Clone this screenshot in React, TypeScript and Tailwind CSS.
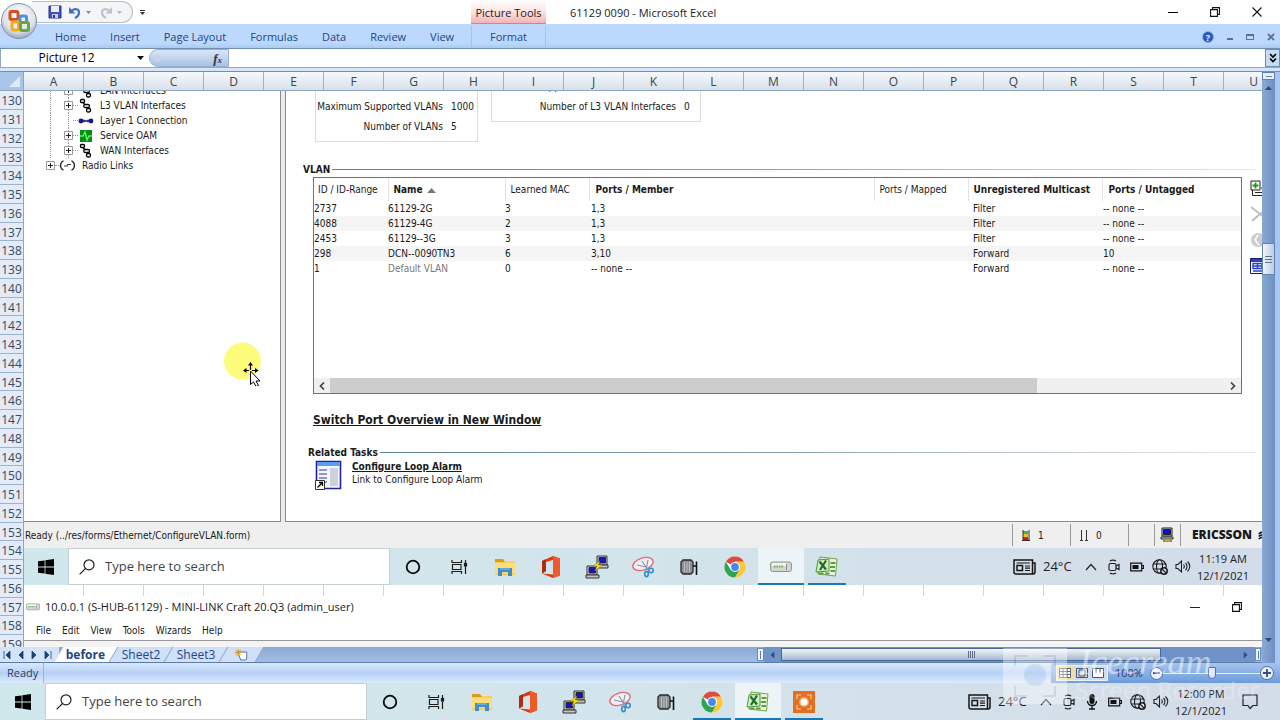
import { useState, type ReactNode } from "react";
import clsx from "clsx";

// ---------- Data ----------

const ribbonTabs = ["Home", "Insert", "Page Layout", "Formulas", "Data", "Review", "View"];
const columns = "ABCDEFGHIJKLMNOPQRSTU".split("");
const rowNumbers = Array.from({ length: 30 }, (_, i) => 130 + i);

const treeItems = [
  { label: "LAN Interfaces", icon: <LinkIcon />, expandable: true },
  { label: "L3 VLAN Interfaces", icon: <LinkIcon />, expandable: true },
  { label: "Layer 1 Connection", icon: <LayerIcon />, expandable: false },
  { label: "Service OAM", icon: <OamIcon />, expandable: true },
  { label: "WAN Interfaces", icon: <LinkIcon />, expandable: true },
];

const vlanColumns = [
  { label: "ID / ID-Range", width: "w-[74px]", pad: "pl-1", bold: false },
  { label: "Name", width: "w-[117px]", pad: "pl-[5px]", bold: true },
  { label: "Learned MAC", width: "w-[84px]", pad: "pl-[5px]", bold: false },
  { label: "Ports / Member", width: "w-[285px]", pad: "pl-[6px]", bold: true },
  { label: "Ports / Mapped", width: "w-[94px]", pad: "pl-[5px]", bold: false },
  { label: "Unregistered Multicast", width: "w-[134px]", pad: "pl-[5px]", bold: true },
  { label: "Ports / Untagged", width: "", pad: "pl-[6px]", bold: true },
];

const vlans = [
  { id: "2737", name: "61129-2G", mac: "3", member: "1,3", multicast: "Filter", untagged: "-- none --" },
  { id: "4088", name: "61129-4G", mac: "2", member: "1,3", multicast: "Filter", untagged: "-- none --" },
  { id: "2453", name: "61129--3G", mac: "3", member: "1,3", multicast: "Filter", untagged: "-- none --" },
  { id: "298", name: "DCN--0090TN3", mac: "6", member: "3,10", multicast: "Forward", untagged: "10" },
  { id: "1", name: "Default VLAN", mac: "0", member: "-- none --", multicast: "Forward", untagged: "-- none --" },
];

// ---------- Icons ----------

function LinkIcon() {
  return (
    <svg width="14" height="15" viewBox="0 0 14 15" fill="none" stroke="#000" strokeWidth="1.3">
      <rect x="1.500" y="1.500" width="4" height="3" rx="1" />
      <path d="M4 5l3 2M6 6.500h3a1.500 1.500 0 0 1 0 3H6.500a1.500 1.500 0 0 1-.5-3zM9 9.500l2 1" />
      <rect x="7.500" y="10.500" width="4" height="3.500" rx="1.500" />
    </svg>
  );
}

function LayerIcon() {
  return (
    <svg width="16" height="8" viewBox="0 0 16 8">
      <path d="M2 4h12" stroke="#111" strokeWidth="1.4" />
      <circle cx="3" cy="4" r="2.400" fill="#14149a" />
      <circle cx="13" cy="4" r="2.400" fill="#14149a" />
      <path d="M6 2.500v3M10 2.500v3" stroke="#14149a" />
    </svg>
  );
}

function OamIcon() {
  return (
    <svg width="12" height="12" viewBox="0 0 12 12">
      <rect width="12" height="12" fill="#0b8a1c" />
      <path d="M0 6h3l2-4 2 8 2-4h3" fill="none" stroke="#4dff4d" strokeWidth="1.400" />
    </svg>
  );
}

function OfficeOrb() {
  return (
    <svg width="38" height="38" viewBox="0 0 38 38">
      <defs>
        <radialGradient id="orb" cx="50%" cy="35%" r="65%">
          <stop offset="0" stopColor="#fff" />
          <stop offset=".7" stopColor="#dde1ea" />
          <stop offset="1" stopColor="#9aa5ba" />
        </radialGradient>
      </defs>
      <circle cx="19" cy="19" r="17.500" fill="url(#orb)" stroke="#8592ab" />
      <g fill="none" strokeWidth="3">
        <rect x="10" y="9.500" width="8" height="8" rx="1.500" stroke="#d8501c" />
        <rect x="20" y="14" width="6.500" height="6.500" rx="1.500" stroke="#4a94dd" />
        <rect x="12" y="20" width="6.500" height="8" rx="1.500" stroke="#f0ad1e" />
        <rect x="20.500" y="20.500" width="8" height="8" rx="1.500" stroke="#6aa83a" />
      </g>
    </svg>
  );
}

function SaveIcon() {
  return (
    <svg width="14" height="14" viewBox="0 0 14 14">
      <path d="M1 1h12v12H1z" fill="#4a51b5" stroke="#2c3190" />
      <rect x="3" y="1" width="8" height="6" fill="#e8edf8" />
      <rect x="4" y="9" width="6" height="4" fill="#c9cfe6" />
      <rect x="5" y="10" width="2" height="3" fill="#2c3190" />
    </svg>
  );
}

function CurvedArrow({ color, flip }: { color: string; flip?: boolean }) {
  return (
    <svg width="12" height="13" viewBox="0 0 12 13" className={clsx(flip && "-scale-x-100")}>
      <path d="M3 4.500C6 2 10 3 10 6.500c0 3-2 4.500-4 5.500" fill="none" stroke={color} strokeWidth="2.200" />
      <path d="M0 1v6.500h6.500z" fill={color} />
    </svg>
  );
}

function Caret({ color = "#35507f", className }: { color?: string; className?: string }) {
  return (
    <svg width="7" height="4" viewBox="0 0 7 4" className={className}>
      <path d="M0 0h7L3.500 4z" fill={color} />
    </svg>
  );
}

function RestoreIcon({ size = 10 }: { size?: number }) {
  return (
    <svg width={size} height={size} viewBox="0 0 10 10" fill="none" stroke="#111" strokeWidth="1.100">
      <path d="M.6 2.600h6.800v6.800H.6zM2.600 2.600V.6h6.800v6.800h-2" />
    </svg>
  );
}

function WindowsIcon() {
  return (
    <svg width="16" height="16" viewBox="0 0 16 16">
      <path d="M0 2.300L6.600 1.400v6.200H0zM7.400 1.300L16 0v7.600H7.400zM0 8.400h6.600v6.200L0 13.700zM7.400 8.400H16V16l-8.600-1.200z" />
    </svg>
  );
}

function SearchIcon() {
  return (
    <svg width="16" height="16" viewBox="0 0 16 16" fill="none" stroke="#222" strokeWidth="1.200">
      <circle cx="10" cy="5.800" r="5" />
      <path d="M6.500 9.500L.6 15.400" />
    </svg>
  );
}

function CortanaIcon() {
  return (
    <svg width="16" height="16" viewBox="0 0 16 16">
      <circle cx="8" cy="8" r="6.300" fill="none" stroke="#0a0a0a" strokeWidth="1.800" />
    </svg>
  );
}

function TaskViewIcon() {
  return (
    <svg width="17" height="16" viewBox="0 0 17 16" fill="none" stroke="#1b1b1b" strokeWidth="1.200">
      <path d="M1 1v2.500h9.500V1M1 15v-2.500h9.500V15M1.500 5.500H10v5H1.500zM14.500 1v3M14.500 7.500V15" />
      <rect x="13.500" y="4.500" width="2" height="2.500" fill="#1b1b1b" />
    </svg>
  );
}

function FolderIcon() {
  return (
    <svg width="22" height="20" viewBox="0 0 22 20">
      <path d="M1 2h8l1.500 2H21v14H1z" fill="#f9cf57" />
      <path d="M1 2h8l1.500 2v1H1z" fill="#d99b1c" />
      <path d="M1 6h20v10H1z" fill="#fddc7b" />
      <path d="M4 11h14v8h-4v-4H8v4H4z" fill="#3f8ecb" />
      <path d="M6 11h10v2H6z" fill="#62abdf" />
    </svg>
  );
}

function OfficeIcon() {
  return (
    <svg width="18" height="22" viewBox="0 0 18 22">
      <path d="M0 5L11 0l7 2.500v17L11 22 0 17.500l11 1V4L4 6v9L0 17.500z" fill="#dc3c12" />
      <path d="M11 0l7 2.500v17L11 22z" fill="#ee5a2a" />
      <path d="M0 5L4 3.300V15l-4 2.500z" fill="#b7290d" />
    </svg>
  );
}

function PuttyIcon() {
  return (
    <svg width="24" height="24" viewBox="0 0 24 24" stroke="#222" strokeWidth=".9">
      <path d="M12 1h10v9H12z" fill="#d5d5c8" />
      <path d="M14 2.500h6.500v5.500H14z" fill="#1414c4" />
      <path d="M11 10h12v3H11z" fill="#c5c5c0" />
      <path d="M2 11h10v9H2z" fill="#d5d5c8" />
      <path d="M4 12.500h6.500V18H4z" fill="#1414c4" />
      <path d="M1 20h13v3H1z" fill="#c5c5c0" />
      <path d="M15 6l-7 5h4l-2 5 7-6h-4z" fill="#ffe716" stroke="#8d7c00" strokeWidth=".5" />
    </svg>
  );
}

function SnipIcon() {
  return (
    <svg width="24" height="22" viewBox="0 0 24 22" fill="none">
      <ellipse cx="12" cy="8" rx="10.500" ry="6" transform="rotate(-18 12 8)" fill="#f6eef2" stroke="#dc6b78" strokeWidth="1.400" />
      <path d="M11 5l6 9M17 4l-2 10M6 9l9 2" stroke="#8796a5" strokeWidth="1.200" />
      <circle cx="20" cy="14.500" r="2.200" stroke="#2f8fd0" strokeWidth="1.600" />
      <ellipse cx="15.500" cy="18" rx="1.800" ry="2.600" stroke="#2f8fd0" strokeWidth="1.600" />
    </svg>
  );
}

function DeviceIcon() {
  return (
    <svg width="18" height="18" viewBox="0 0 18 18">
      <path d="M3 2h8l2 2v10l-2 2H3l-2-2V4z" fill="#8f9295" stroke="#2a2a2a" strokeWidth="1.300" />
      <path d="M4.500 4v10M7 4v10M9.500 4v10" stroke="#b9bcbe" />
      <path d="M13 8h3M16.500 3.500V17" stroke="#111" strokeWidth="1.600" />
    </svg>
  );
}

function ChromeIcon() {
  return (
    <svg width="22" height="22" viewBox="0 0 22 22">
      <circle cx="11" cy="11" r="10.500" fill="#fff" />
      <path d="M11 11L1.900 5.750A10.500 10.500 0 0 1 20.100 5.750H11z" fill="#dd4b3e" />
      <path d="M20.100 5.750A10.500 10.500 0 0 1 11 21.500l4.500-8L11 5.750z" fill="#fcc934" />
      <path d="M11 21.500A10.500 10.500 0 0 1 1.900 5.750L6.500 13.600 15.500 13.500z" fill="#2da44e" />
      <circle cx="11" cy="11" r="5" fill="#fff" />
      <circle cx="11" cy="11" r="3.900" fill="#4688f1" />
    </svg>
  );
}

function SwitchIcon({ width = 22, height = 12 }: { width?: number; height?: number }) {
  return (
    <svg width={width} height={height} viewBox="0 0 22 12">
      <rect x=".6" y="1" width="20.800" height="9.500" rx="2" fill="#d4d6d3" stroke="#8f918f" />
      <rect x="2" y="2" width="14" height="3" fill="#f2f4f1" />
      <path d="M4 5.500h10" stroke="#63b04b" strokeWidth="2" strokeDasharray="1.500 1" />
      <path d="M16.500 3v6" stroke="#8f918f" />
    </svg>
  );
}

function ExcelIcon() {
  return (
    <svg width="24" height="22" viewBox="0 0 24 22">
      <path d="M5 1l17 2-1.500 17L3 18z" fill="#e9f3df" stroke="#6ea54a" />
      <path d="M3 4L14 3v12L1 16z" fill="#d6ebc2" stroke="#4f9434" />
      <path d="M4.500 5.500l6.500 8M11 4.500L5 14" stroke="#1d6b2d" strokeWidth="2.200" />
      <path d="M15.500 7h5M15 11h5M3.500 17.500h5M10 17.500h4.500M15.500 15h4.500" stroke="#5aa23c" strokeWidth="2.200" />
    </svg>
  );
}

function RecorderIcon() {
  return (
    <svg width="22" height="22" viewBox="0 0 22 22">
      <rect width="22" height="22" fill="#e2701f" />
      <path d="M4 8V4h4M14 4h4v4M18 14v4h-4M8 18H4v-4" fill="none" stroke="#fbc9a0" strokeWidth="1.200" />
      <circle cx="11" cy="11" r="5" fill="#f6a566" />
      <circle cx="11" cy="11" r="3.600" fill="#fff" />
    </svg>
  );
}

function NewsIcon() {
  return (
    <svg width="23" height="16" viewBox="0 0 23 16" fill="none" stroke="#161616" strokeWidth="1.500">
      <path d="M1 1h18.500v14H3a2 2 0 0 1-2-2zM19.500 4H22v9a2 2 0 0 1-2 2" />
      <rect x="4" y="6.500" width="5.500" height="5" />
      <path d="M3.500 4H17M12 7h5M12 9.200h5M12 11.500h5" strokeWidth="1.200" />
    </svg>
  );
}

function ChevronUpIcon() {
  return (
    <svg width="12" height="8" viewBox="0 0 12 8" fill="none" stroke="#222" strokeWidth="1.200">
      <path d="M1 7l5-5.500L11 7" />
    </svg>
  );
}

function MeetIcon() {
  return (
    <svg width="12" height="16" viewBox="0 0 12 16" fill="none" stroke="#222" strokeWidth="1.200">
      <rect x="1" y="4.500" width="7" height="7" rx="1.500" />
      <path d="M8 7l3-1.500v5L8 9M2 2c1.500-1.300 4.500-1.300 6 0M2 14c1.500 1.300 4.500 1.300 6 0" />
    </svg>
  );
}

function MicIcon() {
  return (
    <svg width="12" height="16" viewBox="0 0 12 16">
      <rect x="3.500" y="0" width="5" height="10" rx="2.500" fill="#111" />
      <path d="M1.500 7c0 6 9 6 9 0M6 11.500V15M3 15h6" fill="none" stroke="#111" strokeWidth="1.400" />
    </svg>
  );
}

function BatteryIcon() {
  return (
    <svg width="14" height="10" viewBox="0 0 14 10">
      <path d="M.7 1.200h11v7.600H.7zM11.700 3.500h1.800v3h-1.800" fill="none" stroke="#111" strokeWidth="1.200" />
      <rect x="2.500" y="3" width="6" height="4" fill="#111" />
    </svg>
  );
}

function GlobeIcon() {
  return (
    <svg width="16" height="16" viewBox="0 0 16 16" fill="none" stroke="#1a1a1a" strokeWidth="1.100">
      <circle cx="7.500" cy="7.500" r="6.700" />
      <ellipse cx="7.500" cy="7.500" rx="3" ry="6.700" />
      <path d="M1 5h13M1 10h8" />
      <circle cx="12" cy="12" r="3.200" fill="#d5e1e9" strokeWidth="1.500" />
      <path d="M10 10l4 4" />
    </svg>
  );
}

function VolumeIcon() {
  return (
    <svg width="16" height="13" viewBox="0 0 16 13" fill="none" stroke="#222" strokeWidth="1.100">
      <path d="M1 4.500h2L6.500 1v11L3 8.500H1zM8.500 4.500c1 1.200 1 2.800 0 4M10.500 3c2 2 2 5 0 7M12.500 1.500c3 3 3 7 0 10" />
    </svg>
  );
}

function ComputerIcon() {
  return (
    <svg width="15" height="16" viewBox="0 0 15 16" stroke="#222">
      <path d="M2 1h10v8H2z" fill="#c9cbd8" />
      <path d="M3.500 2.500h7v5h-7z" fill="#0a12d6" />
      <path d="M1 10h12v2H1zM3 14h9" fill="#ddd" />
      <path d="M5 13.500h5" stroke="#d8b714" strokeWidth="1.500" />
    </svg>
  );
}

function TaskShortcutIcon() {
  return (
    <svg width="27" height="31" viewBox="0 0 27 31">
      <path d="M1.500 1.500h24v27h-24z" fill="#f4f7ff" stroke="#23239a" strokeWidth="1.600" />
      <path d="M2 2h23v4H2z" fill="#5b9df0" />
      <path d="M4 10h8M4 14h8M4 18h8M8 22h4" stroke="#7272cf" strokeWidth="1.500" />
      <path d="M15 8h8v18h-8z" fill="#ccd2da" />
      <path d="M.5 20.500h9v9h-9z" fill="#fff" stroke="#333" />
      <path d="M2.500 27.500L7 23M4 22.500h3.500V26" fill="none" stroke="#000" strokeWidth="1.300" />
    </svg>
  );
}

// ---------- Excel chrome ----------

function TitleBar() {
  return (
    <header className="relative flex h-6 shrink-0 items-center bg-white">
      <button aria-label="Office Button" className="absolute left-0 top-[2px] z-20">
        <OfficeOrb />
      </button>
      <div className="ml-8 flex h-[22px] w-[101px] items-center gap-[5px] rounded-r-full border border-l-0 border-[#b9bdc4] bg-[#f4f5f7] pl-4">
        <button aria-label="Save"><SaveIcon /></button>
        <button aria-label="Undo" className="ml-[2px]"><CurvedArrow color="#3f6fc6" /></button>
        <Caret color="#7a8cae" className="h-[3px] w-[5px]" />
        <button aria-label="Redo" className="ml-1"><CurvedArrow color="#bcc2cc" flip /></button>
        <Caret color="#b0b6c0" className="h-[3px] w-[5px]" />
      </div>
      <button aria-label="Customize Quick Access Toolbar" className="ml-[7px] flex flex-col items-center gap-[1px]">
        <span className="h-px w-[5px] bg-[#333]" />
        <Caret color="#333" className="h-[3px] w-[5px]" />
      </button>
      <div className="ml-[326px] flex h-6 w-[75px] items-center justify-center border-b border-[#e77b80] bg-gradient-to-b from-white via-[#fbe3e3] to-[#f3b3b5] pt-[3px] text-[11px] text-[#222]">
        Picture Tools
      </div>
      <h1 className="ml-6 pt-[2px] text-[11px] text-[#222]">61129 0090 - Microsoft Excel</h1>
      <div className="ml-auto flex items-center gap-8 pr-[18px]">
        <button aria-label="Minimize" className="h-px w-[10px] bg-black" />
        <button aria-label="Restore"><RestoreIcon /></button>
        <button aria-label="Close">
          <svg width="10" height="10" viewBox="0 0 10 10" stroke="#111" strokeWidth="1.100">
            <path d="M.5.500l9 9M9.500.500l-9 9" />
          </svg>
        </button>
      </div>
    </header>
  );
}

function Ribbon() {
  return (
    <nav className="flex h-[25px] shrink-0 items-center border-b border-[#6d8fb3] bg-gradient-to-b from-[#bcd9fd] from-80% to-[#a9cbee] pt-[2px] text-[11px] text-[#1f4584]">
      <ul className="flex w-[471px] items-center gap-6 pl-[55px]">
        {ribbonTabs.map((tab) => (
          <li key={tab}>
            <button className="whitespace-nowrap">{tab}</button>
          </li>
        ))}
      </ul>
      <button className="h-full w-[75px] border-x border-[#a8c2e3]">Format</button>
      <div className="ml-auto flex items-center gap-[13px] pr-[5px]">
        <button aria-label="Help" className="flex size-3 items-center justify-center rounded-full border border-[#8fb2e6] bg-[#2358c4] text-[9px] font-bold leading-none text-white">
          ?
        </button>
        <button aria-label="Minimize workbook" className="mt-[3px] h-[2px] w-[6px] bg-[#5d708c]" />
        <button aria-label="Restore workbook" className="h-[6px] w-[8px] border border-t-2 border-[#5d708c]" />
        <button aria-label="Close workbook">
          <svg width="8" height="8" viewBox="0 0 8 8" stroke="#5d708c" strokeWidth="1.800">
            <path d="M1 1l6 6M7 1L1 7" />
          </svg>
        </button>
      </div>
    </nav>
  );
}

function FormulaBar() {
  return (
    <div className="h-[23px] shrink-0 border-b border-[#6d8fb3] bg-[#d5e6fa]">
      <div className="flex h-[19px] items-stretch border-b border-[#8fa9c8] bg-white">
        <input aria-label="Name Box" defaultValue="Picture 12" className="w-[132px] border-l border-[#8fa9c8] bg-white text-center text-xs text-black outline-none" />
        <button aria-label="Name list" className="flex w-4 items-center justify-center">
          <Caret color="#000" />
        </button>
        <div className="ml-[1px] flex w-20 items-center justify-between rounded-l-full border border-[#9cb1cf] bg-gradient-to-b from-[#dbe7f8] to-[#a9c1e4] pl-1">
          <span className="size-[7px] rounded-full bg-[#c9d3e3]" />
          <button className="pr-[6px] font-['Liberation_Serif',serif] text-[13px] font-bold italic leading-none text-[#333]">
            f<span className="text-[9px]">x</span>
          </button>
        </div>
        <input aria-label="Formula" className="min-w-0 flex-1 bg-white outline-none" />
        <button aria-label="Expand formula bar" className="flex w-[15px] flex-col items-center justify-center border border-[#6d8fb3] bg-[#c9dbf4]">
          <svg width="8" height="10" viewBox="0 0 8 10" fill="none" stroke="#000" strokeWidth="1.600">
            <path d="M1 1l3 3 3-3M1 5.500l3 3 3-3" />
          </svg>
        </button>
      </div>
    </div>
  );
}

function ColumnHeader() {
  return (
    <div className="flex h-[19px] shrink-0 overflow-hidden border-b border-[#8ea5bf] bg-gradient-to-b from-[#f6f9fc] to-[#d8e0ea] text-xs text-[#3b454f]">
      <button aria-label="Select all" className="flex w-6 shrink-0 items-end justify-end border-r border-[#8ea5bf] bg-[#a9c4e9] p-[3px]">
        <svg width="11" height="11" viewBox="0 0 11 11">
          <path d="M11 0v11H0z" fill="#dfe9f7" />
        </svg>
      </button>
      {columns.map((letter) => (
        <div key={letter} className="flex w-[60px] shrink-0 items-center justify-center border-r border-[#9eb0c4] pt-[2px]">
          {letter}
        </div>
      ))}
    </div>
  );
}

function RowHeader() {
  return (
    <div className="w-6 shrink-0 overflow-hidden border-r border-[#8ea5bf] bg-[#e2ebf7] text-center text-xs text-[#3b4a5c]">
      {rowNumbers.map((n, i) => (
        <div
          key={n}
          className={clsx("flex items-center justify-center border-b border-[#9ab4d0] pt-[2px]", i % 4 === 3 ? "h-[18px]" : "h-[19px]")}
        >
          {n}
        </div>
      ))}
    </div>
  );
}

function VerticalScrollBar() {
  return (
    <div className="flex shrink-0">
      <div className="flex w-[13px] flex-col items-center bg-gradient-to-r from-[#89a9d4] to-[#6c90c2] pb-[21px]">
        <div className="flex h-2 w-full items-center justify-center border border-[#5f82b2] bg-[#e8f0fb]">
          <span className="h-px w-[6px] bg-[#5f82b2]" />
        </div>
        <Caret color="#2d4a7a" className="mt-[6px] rotate-180" />
        <div className="mt-[153px] flex h-8 w-full flex-col items-center justify-center gap-[2px] border border-[#5f82b2] bg-gradient-to-r from-[#f2f6fb] to-[#bccbdf]">
          <span className="h-px w-[7px] bg-[#60718c]" />
          <span className="h-px w-[7px] bg-[#60718c]" />
          <span className="h-px w-[7px] bg-[#60718c]" />
        </div>
        <Caret color="#2d4a7a" className="mt-auto" />
      </div>
      <div className="w-[5px] bg-[#a9c6f2]" />
    </div>
  );
}

function SheetTabs() {
  const [active, setActive] = useState("before");
  return (
    <div className="flex h-4 shrink-0 items-stretch border-b border-[#5b7dab] bg-gradient-to-b from-[#8aa9d6] to-[#a3bee3]">
      <div className="flex w-[59px] items-center justify-around bg-[#d3e3f8] pr-1">
        {["M1 0v8M7 0v8L3 4z", "M6 0v8L2 4z", "M2 0v8l4-4z", "M1 0v8l4-4zM7 0v8"].map((d) => (
          <button key={d} aria-label="Scroll sheets">
            <svg width="8" height="8" viewBox="0 0 8 8" fill="#1d3f7a" stroke="#1d3f7a" strokeWidth=".8">
              <path d={d} />
            </svg>
          </button>
        ))}
      </div>
      {["before", "Sheet2", "Sheet3"].map((sheet) => (
        <button
          key={sheet}
          onClick={() => setActive(sheet)}
          className={clsx(
            "flex w-[55px] -skew-x-[30deg] items-center justify-center border-r border-[#7f9cc6] text-xs text-[#1f4584]",
            active === sheet ? "bg-white font-bold" : "bg-[#cfe0f7]"
          )}
        >
          <span className="skew-x-[30deg]">{sheet}</span>
        </button>
      ))}
      <button aria-label="Insert worksheet" className="flex w-9 -skew-x-[30deg] items-center justify-center border-r border-[#7f9cc6] bg-[#cfe0f7]">
        <svg width="14" height="12" viewBox="0 0 14 12" className="skew-x-[30deg]">
          <path d="M3 3h9v7l-1 1H6z" fill="#fff" stroke="#5874a8" />
          <path d="M3.500 0v7M0 3.500h7M1 1l5 5M6 1L1 6" stroke="#d09a2c" />
        </svg>
      </button>
      <div className="ml-auto flex w-[505px] items-stretch">
        <div className="my-px flex w-[7px] items-center justify-center border border-[#6b8bb8] bg-[#eef4fc]">
          <span className="h-2 w-px bg-[#5b7dab]" />
        </div>
        <div className="flex w-[17px] items-center justify-center bg-[#7093c8]">
          <Caret color="#2d4a7a" className="rotate-90" />
        </div>
        <div className="flex flex-1 items-stretch bg-[#6f93c8]">
          <div className="my-px flex w-[380px] items-center justify-center gap-[1px] border border-[#48679a] bg-gradient-to-b from-[#f3f6fa] to-[#a5b7cf]">
            <span className="h-[7px] w-px bg-[#5d708c]" />
            <span className="h-[7px] w-px bg-[#5d708c]" />
            <span className="h-[7px] w-px bg-[#5d708c]" />
            <span className="h-[7px] w-px bg-[#5d708c]" />
          </div>
          <Caret color="#2d4a7a" className="my-auto ml-auto mr-[6px] -rotate-90" />
        </div>
        <div className="my-px mr-px flex w-[6px] items-center justify-center border border-[#6b8bb8] bg-[#eef4fc]">
          <span className="h-2 w-px bg-[#5b7dab]" />
        </div>
      </div>
    </div>
  );
}

function StatusBar() {
  const [zoom, setZoom] = useState(50);
  return (
    <footer className="flex h-5 shrink-0 items-stretch bg-gradient-to-b from-[#d9e8fb] via-[#b5d0f5] to-[#dceafc] text-[11px] text-[#1f3a6e]">
      <div className="flex w-11 items-center border-r border-[#9ab5dc] pl-[7px]">Ready</div>
      <div className="ml-auto flex w-[229px] items-center bg-gradient-to-b from-[#a5c4ee] to-[#6c9bdb] pl-[5px] pr-[6px]">
        <div className="flex h-4 w-[52px] border border-white/60 bg-[#cfdcf0]">
          <button aria-label="Normal view" className="flex flex-1 items-center justify-center bg-[#fbdc96]">
            <svg width="12" height="10" viewBox="0 0 12 10" fill="#fff" stroke="#4a5568" strokeWidth=".9">
              <path d="M.5.500h11v9H.5zM.5 3.500h11M.5 6.500h11M4 .5v9M8 .5v9" />
            </svg>
          </button>
          <button aria-label="Page layout view" className="flex flex-1 items-center justify-center">
            <svg width="12" height="10" viewBox="0 0 12 10" fill="#d7dde6" stroke="#4a5568">
              <path d="M.5.500h11v9H.5zM3 2h6v6H3z" />
            </svg>
          </button>
          <button aria-label="Page break preview" className="flex flex-1 items-center justify-center">
            <svg width="12" height="10" viewBox="0 0 12 10" fill="#fff" stroke="#4a5568">
              <path d="M.5.500h11v9H.5zM4 .5v5M8 .5v5" />
            </svg>
          </button>
        </div>
        <span className="w-[43px] text-center">100%</span>
        <button aria-label="Zoom out" className="ml-auto flex size-[13px] items-center justify-center rounded-full border border-[#4f73a8] bg-[#e9f1fb]">
          <span className="h-[2px] w-[7px] bg-[#33507f]" />
        </button>
        <input
          aria-label="Zoom"
          type="range"
          value={zoom}
          onChange={(e) => setZoom(Number(e.target.value))}
          className="h-3 w-[97px] appearance-none bg-transparent [&::-webkit-slider-runnable-track]:h-px [&::-webkit-slider-runnable-track]:bg-white/80 [&::-webkit-slider-thumb]:-mt-[6px] [&::-webkit-slider-thumb]:h-3 [&::-webkit-slider-thumb]:w-2 [&::-webkit-slider-thumb]:appearance-none [&::-webkit-slider-thumb]:rounded-b-full [&::-webkit-slider-thumb]:border [&::-webkit-slider-thumb]:border-[#4f73a8] [&::-webkit-slider-thumb]:bg-[#dfe9f7]"
        />
        <button aria-label="Zoom in" className="flex size-[14px] items-center justify-center rounded-full border border-[#4f73a8] bg-[#e9f1fb] text-[#33507f]">
          <svg width="8" height="8" viewBox="0 0 8 8" stroke="#33507f" strokeWidth="1.800">
            <path d="M0 4h8M4 0v8" />
          </svg>
        </button>
      </div>
    </footer>
  );
}

// ---------- Windows taskbar ----------

type App = { name: string; icon: ReactNode; state?: "open" | "active" };

const pinnedApps: App[] = [
  { name: "Cortana", icon: <CortanaIcon /> },
  { name: "Task View", icon: <TaskViewIcon /> },
  { name: "File Explorer", icon: <FolderIcon /> },
  { name: "Office", icon: <OfficeIcon /> },
  { name: "PuTTY", icon: <PuttyIcon /> },
  { name: "Snipping Tool", icon: <SnipIcon /> },
  { name: "Device", icon: <DeviceIcon /> },
];

function Taskbar({ id, apps, time, live }: { id: string; apps: App[]; time: string; live?: boolean }) {
  return (
    <div className="flex h-[37px] shrink-0 items-stretch bg-gradient-to-r from-[#cfe8ec] via-[#d3e4eb] to-[#d3dce9]">
      <button aria-label="Start" className={clsx("flex items-center justify-center", live ? "w-[45px]" : "w-[44px]")}>
        <WindowsIcon />
      </button>
      <label htmlFor={id} className="flex w-[322px] items-center gap-[10px] border border-[#c3cfd4] bg-white pl-[10px]">
        <SearchIcon />
        <input id={id} placeholder="Type here to search" className="w-64 text-[13px] text-[#444] outline-none placeholder:text-[#444]" />
      </label>
      {[...pinnedApps, ...apps].map((app) => (
        <button
          key={app.name}
          aria-label={app.name}
          className={clsx("flex w-[46px] flex-col items-center", app.state === "active" && "bg-[#edf4f8]")}
        >
          <span className="flex flex-1 items-center">{app.icon}</span>
          {app.state && <span className={clsx("-mt-[2px] h-[2px] bg-[#1a78b8]", app.state === "active" ? "w-full" : "w-[38px]")} />}
        </button>
      ))}
      <div className={clsx("ml-auto flex items-center text-[#222]", live ? "pr-[22px]" : "pr-[10px]")}>
        <NewsIcon />
        <span className="ml-[7px] w-9 text-[13px]">24°C</span>
        <div className="flex">
          <TrayIcon><ChevronUpIcon /></TrayIcon>
          <TrayIcon><MeetIcon /></TrayIcon>
          {live && <TrayIcon><MicIcon /></TrayIcon>}
          <TrayIcon><BatteryIcon /></TrayIcon>
          <TrayIcon><GlobeIcon /></TrayIcon>
          <TrayIcon><VolumeIcon /></TrayIcon>
        </div>
        <div className="w-[58px] text-center text-[11px] leading-[17px]">
          <div>{time}</div>
          <div>12/1/2021</div>
        </div>
        {live && (
          <button aria-label="Notifications" className="ml-3">
            <svg width="16" height="16" viewBox="0 0 16 16" fill="none" stroke="#222" strokeWidth="1.200">
              <path d="M1 1h14v10.500h-4L8 14.500l-2-3H1z" />
            </svg>
          </button>
        )}
      </div>
    </div>
  );
}

function TrayIcon({ children }: { children: ReactNode }) {
  return <span className="flex w-[23px] items-center justify-center">{children}</span>;
}

// ---------- MINI-LINK Craft window ----------

function Expander() {
  return (
    <svg width="9" height="9" viewBox="0 0 9 9">
      <path d="M.5.500h8v8h-8z" fill="#fff" stroke="#9a9a9a" />
      <path d="M2 4.500h5M4.500 2v5" stroke="#222" />
    </svg>
  );
}

function NavigationTree() {
  return (
    <aside className="w-[257px] shrink-0 overflow-hidden border-b border-r border-[#8c8c8c] pl-[26px]">
      <ul className="-mt-2">
        {treeItems.map((item) => (
          <li key={item.label} className="flex h-[15px] border-l border-dotted border-[#999] pl-[17px]">
            <div className="flex items-center border-l border-dotted border-[#999]">
              <span className="-ml-[5px] flex w-[9px]">{item.expandable && <Expander />}</span>
              <span className="w-[5px] border-t border-dotted border-[#999]" />
              <span className="flex w-4 justify-center">{item.icon}</span>
              <span className="ml-[6px] whitespace-nowrap">{item.label}</span>
            </div>
          </li>
        ))}
        <li className="-ml-1 flex h-[15px] items-center">
          <Expander />
          <span className="w-1 border-t border-dotted border-[#999]" />
          <svg width="17" height="11" viewBox="0 0 17 11" fill="none" stroke="#222" strokeWidth="1.300">
            <path d="M4.500.800C.5 3 .5 8 4.500 10.200M12.500.800c4 2.200 4 7.200 0 9.400" />
            <path d="M5 6h3.500V4.500H12" strokeWidth=".9" />
          </svg>
          <span className="ml-[6px]">Radio Links</span>
        </li>
      </ul>
    </aside>
  );
}

function SectionTitle({ children }: { children: ReactNode }) {
  return (
    <div className="flex h-4 items-center gap-[2px] pr-[6px] font-bold">
      <h2>{children}</h2>
      <span className="h-px flex-1 bg-gradient-to-r from-[#5b7f9f] via-[#8fa5b5] to-[#e8e8e8]" />
    </div>
  );
}

function VlanTable() {
  return (
    <div className="flex h-[217px] min-w-0 flex-1 flex-col border border-[#4f7aa6]">
      <table className="w-full table-fixed border-collapse text-left">
        <thead>
          <tr className="h-[23px]">
            {vlanColumns.map((col) => (
              <th
                key={col.label}
                className={clsx(
                  "whitespace-nowrap border-r border-[#e3e3e3] p-0 last:border-r-0",
                  col.width,
                  col.pad,
                  col.bold ? "font-bold" : "font-normal"
                )}
              >
                {col.label}
                {col.label === "Name" && <Caret color="#777" className="ml-1 inline h-[5px] w-[9px] rotate-180" />}
              </th>
            ))}
          </tr>
        </thead>
        <tbody>
          {vlans.map((vlan) => (
            <tr key={vlan.id} className="h-[15px] leading-[15px] even:bg-[#f5f5f5]">
              <td className="p-0">{vlan.id}</td>
              <td className={clsx("p-0", vlan.id === "1" && "text-[#777]")}>{vlan.name}</td>
              <td className="p-0">{vlan.mac}</td>
              <td className="p-0 pl-[2px]">{vlan.member}</td>
              <td className="p-0" />
              <td className="p-0 pl-[5px]">{vlan.multicast}</td>
              <td className="p-0 pl-[1px]">{vlan.untagged}</td>
            </tr>
          ))}
        </tbody>
      </table>
      <div className="mt-auto flex h-[15px] items-center bg-[#f0f0f0]">
        <button aria-label="Scroll left" className="flex w-4 justify-center">
          <svg width="6" height="8" viewBox="0 0 6 8" fill="none" stroke="#444" strokeWidth="1.700"><path d="M5 .5L1.500 4 5 7.500" /></svg>
        </button>
        <div className="flex h-full flex-1">
          <div className="w-[79%] bg-[#cdcdcd]" />
        </div>
        <button aria-label="Scroll right" className="flex w-4 justify-center">
          <svg width="6" height="8" viewBox="0 0 6 8" fill="none" stroke="#444" strokeWidth="1.700"><path d="M1 .5L4.500 4 1 7.500" /></svg>
        </button>
      </div>
    </div>
  );
}

function TableActions() {
  return (
    <div className="ml-2 flex w-[12px] shrink-0 flex-col gap-[10px] overflow-hidden pt-[3px]">
      <button aria-label="Add">
        <svg width="16" height="16" viewBox="0 0 16 16">
          <path d="M1 1h9v9H1z" fill="#fff" stroke="#222" />
          <path d="M5.500 2.500v6M2.500 5.500h6" stroke="#18a018" strokeWidth="1.800" />
          <path d="M2.500 10v5.500H14M5 12.500h8M11 8h4" fill="none" stroke="#222" />
        </svg>
      </button>
      <button aria-label="Remove">
        <svg width="16" height="16" viewBox="0 0 16 16" fill="none" stroke="#bbb" strokeWidth="1.800"><path d="M1 1l9 7-8 7M16 3l-6 5 6 5" /></svg>
      </button>
      <button aria-label="Undo change">
        <svg width="16" height="16" viewBox="0 0 16 16"><circle cx="8" cy="8" r="7" fill="#ccc" /><path d="M8 3L5 8l4 5" fill="none" stroke="#fff" strokeWidth="1.500" /></svg>
      </button>
      <button aria-label="Details">
        <svg width="16" height="16" viewBox="0 0 16 16">
          <path d="M.5.500h15v15H.5z" fill="#fff" stroke="#111a6e" />
          <path d="M1 1h14v3H1z" fill="#2a3fd0" />
          <path d="M3 5.500h9v5H3zM3 8h9M7.500 5.500v5M3 13h9" fill="none" stroke="#2a3fd0" strokeWidth="1.400" />
        </svg>
      </button>
    </div>
  );
}

function VlanForm() {
  return (
    <section className="min-w-0 flex-1 overflow-hidden border-b border-l border-[#8c8c8c] pl-[17px]">
      <div className="flex items-start gap-[13px] pl-3">
        <dl className="grid h-[51px] w-[163px] grid-cols-[1fr_24px] content-start gap-x-2 border border-t-0 border-[#dcdcdc] pr-[2px] pt-[6px] leading-5">
          <dt className="whitespace-nowrap text-right">Maximum Supported VLANs</dt>
          <dd>1000</dd>
          <dt className="text-right">Number of VLANs</dt>
          <dd>5</dd>
        </dl>
        <dl className="grid h-[31px] w-[210px] grid-cols-[1fr_16px] content-end gap-x-2 overflow-hidden border border-t-0 border-[#dcdcdc] pb-1 leading-5">
          <dt className="pl-[45px]">Supported</dt>
          <dd />
          <dt className="text-right">Number of L3 VLAN Interfaces</dt>
          <dd>0</dd>
        </dl>
      </div>

      <div className="pt-[19px]">
        <SectionTitle>VLAN</SectionTitle>
      </div>
      <div className="flex pl-[10px]">
        <VlanTable />
        <TableActions />
      </div>

      <p className="mt-[18px] pl-[10px] text-xs font-bold leading-4">
        <a href="#" className="underline">Switch Port Overview in New Window</a>
      </p>

      <div className="mt-4 pl-[5px]">
        <SectionTitle>Related Tasks</SectionTitle>
      </div>
      <div className="flex gap-[10px] pl-3 leading-[13px]">
        <TaskShortcutIcon />
        <div>
          <a href="#" className="font-bold underline">Configure Loop Alarm</a>
          <p>Link to Configure Loop Alarm</p>
        </div>
      </div>
    </section>
  );
}

function CraftStatusBar() {
  return (
    <div className="flex h-[26px] shrink-0 items-stretch bg-[#efefef] py-[2px]">
      <span className="self-center pl-[1px]">Ready (../res/forms/Ethernet/ConfigureVLAN.form)</span>
      <div className="ml-auto flex w-[58px] items-center gap-2 border-l border-[#999] pl-[9px]">
        <svg width="8" height="11" viewBox="0 0 8 11">
          <path d="M1 1h5v3H1z" fill="#30c030" /><path d="M1 4h5v3H1z" fill="#f0c020" /><path d="M1 7h5v3H1z" fill="#e02020" />
          <path d="M1 0v10h6V0M0 10.500h8" fill="none" stroke="#333" />
        </svg>
        1
      </div>
      <div className="flex w-[58px] items-center gap-2 border-l border-[#999] pl-[9px]">
        <svg width="8" height="11" viewBox="0 0 8 11" fill="none" stroke="#333"><path d="M1.500 0v10M6.500 0v10M0 10.500h3M5 10.500h3" /></svg>
        0
      </div>
      <div className="w-[26px] border-l border-[#999]" />
      <div className="flex w-[26px] items-center justify-center border-l border-[#999]"><ComputerIcon /></div>
      <div className="flex w-[82px] items-center gap-[6px] border-l border-[#999] pl-[11px] font-['Open_Sans',sans-serif] text-xs font-extrabold">
        ERICSSON
        <svg width="6" height="12" viewBox="0 0 6 12" stroke="#111" strokeWidth="2.400"><path d="M1 4l5-2.500M1 8l5-2.500M1 12l5-2.500" /></svg>
      </div>
    </div>
  );
}

function NextCapture() {
  return (
    <div className="flex min-h-0 flex-1 flex-col overflow-hidden bg-white">
      <div className="flex h-[22px] shrink-0 items-center pl-[2px] font-['Open_Sans',sans-serif] text-[11px]">
        <SwitchIcon width={14} height={8} />
        <span className="ml-[5px]">10.0.0.1 (S-HUB-61129) - MINI-LINK Craft 20.Q3 (admin_user)</span>
        <div className="ml-auto flex items-center gap-8 pr-5">
          <button aria-label="Minimize capture" className="h-px w-[10px] bg-[#222]" />
          <button aria-label="Restore capture"><RestoreIcon /></button>
        </div>
      </div>
      <ul className="flex h-[23px] shrink-0 items-center gap-[11px] border-b border-[#999] pl-3 pt-[2px]">
        {["File", "Edit", "View", "Tools", "Wizards", "Help"].map((menu) => (
          <li key={menu}><button>{menu}</button></li>
        ))}
      </ul>
      <div className="flex-1 bg-[#f4f4f4]" />
    </div>
  );
}

function Worksheet() {
  return (
    <div className="flex min-w-0 flex-1 flex-col overflow-hidden bg-white font-['DejaVu_Sans_Condensed','DejaVu_Sans',sans-serif] text-[10px] text-[#1a1a1a]">
      <div className="flex h-[431px] shrink-0 bg-[#ececec]">
        <div className="flex bg-white"><NavigationTree /></div>
        <div className="w-1 shrink-0" />
        <div className="flex min-w-0 flex-1 bg-white"><VlanForm /></div>
      </div>
      <CraftStatusBar />
      <div className="shrink-0 font-['Open_Sans',sans-serif]">
        <Taskbar
          id="capture-search"
          time="11:19 AM"
          apps={[
            { name: "Chrome", icon: <ChromeIcon /> },
            { name: "MINI-LINK Craft", icon: <SwitchIcon />, state: "active" },
            { name: "Excel", icon: <ExcelIcon />, state: "open" },
          ]}
        />
      </div>
      <div className="flex h-[11px] shrink-0 overflow-hidden">
        {columns.map((letter) => (
          <span key={letter} className="w-[60px] shrink-0 border-r border-[#d3d3d3]" />
        ))}
      </div>
      <NextCapture />
    </div>
  );
}

// Mouse highlight with the move cursor on top
function MovePointer() {
  return (
    <svg width="40" height="44" viewBox="0 0 40 44" className="pointer-events-none absolute left-[223px] top-[342px] z-10">
      <circle cx="19.500" cy="19" r="18.500" fill="#fdfb7c" />
      <path d="M27.500 22v6M21 28.500h5M29 28.500h5" stroke="#000" strokeWidth="1.200" />
      <path d="M27.500 20l-2.500 3.500h5zM20 28.500l3.500-2.500v5zM35.500 28.500L32 26v5z" />
      <path d="M27.500 29v13.500l3-2.500 2.500 4.500 2.500-1-2.500-4.500h4z" fill="#fff" stroke="#000" />
    </svg>
  );
}

function RecorderWatermark() {
  return (
    <div className="pointer-events-none absolute bottom-4 right-2 z-30 flex gap-2 text-white">
      <svg width="64" height="56" viewBox="0 0 64 56" className="opacity-40">
        <path d="M0 0h64v56H0z" fill="#fff" />
        <path d="M12 18V8h12M40 8h12v10M52 38v10H40M24 48H12V38" fill="none" stroke="#c3cede" strokeWidth="2" />
        <circle cx="32" cy="27" r="11" fill="#c3d7f2" />
      </svg>
      <div className="w-[197px]">
        <p className="pl-1 font-['Liberation_Serif',serif] text-4xl italic leading-7 opacity-50">Icecream</p>
        <p className="whitespace-nowrap text-2xl leading-7 opacity-25">Screen Recorder</p>
      </div>
    </div>
  );
}

export default function App() {
  return (
    <div className="relative flex h-screen flex-col overflow-hidden bg-white font-['Open_Sans','Noto_Sans',sans-serif]">
      <TitleBar />
      <Ribbon />
      <FormulaBar />
      <main className="flex min-h-0 flex-1">
        <div className="flex min-w-0 flex-1 flex-col">
          <ColumnHeader />
          <div className="flex min-h-0 flex-1">
            <RowHeader />
            <Worksheet />
          </div>
          <SheetTabs />
        </div>
        <VerticalScrollBar />
      </main>
      <StatusBar />
      <Taskbar
        id="taskbar-search"
        time="12:00 PM"
        live
        apps={[
          { name: "Chrome", icon: <ChromeIcon />, state: "open" },
          { name: "Excel", icon: <ExcelIcon />, state: "active" },
          { name: "Screen Recorder", icon: <RecorderIcon />, state: "open" },
        ]}
      />
      <MovePointer />
      <RecorderWatermark />
    </div>
  );
}
